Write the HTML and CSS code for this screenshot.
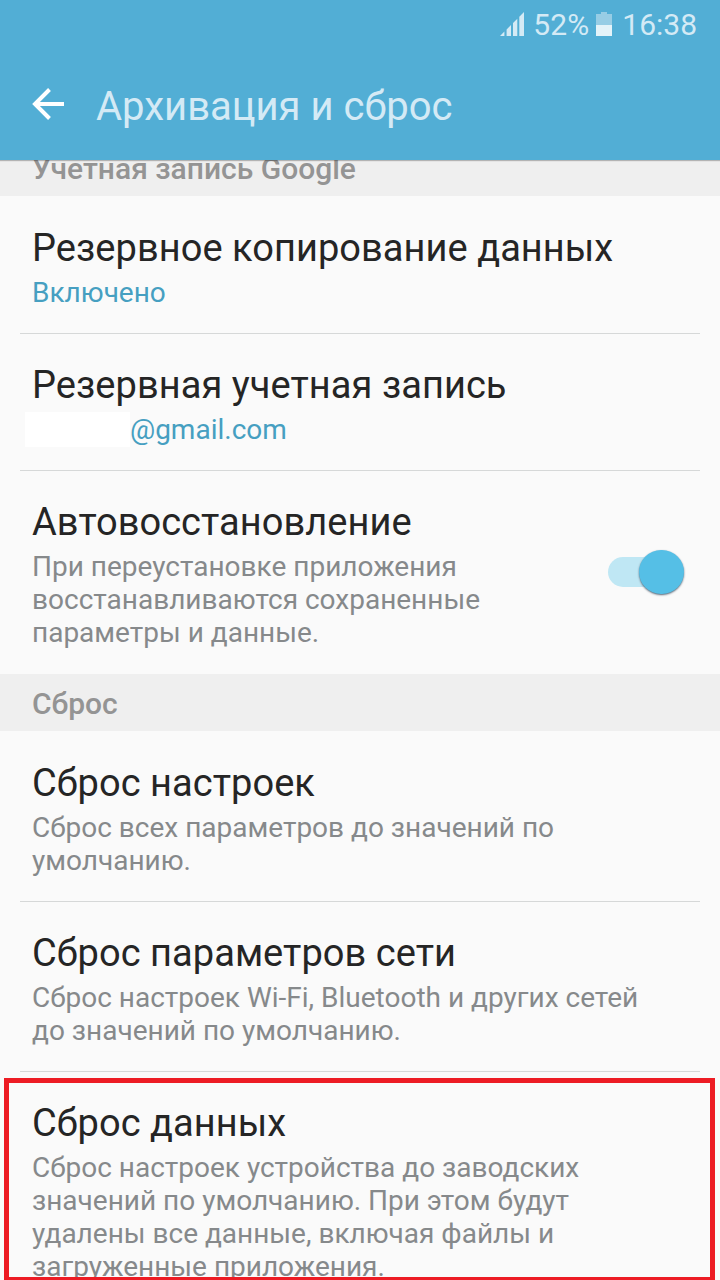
FILE: index.html
```html
<!DOCTYPE html>
<html lang="ru">
<head>
<meta charset="utf-8">
<title>Архивация и сброс</title>
<link rel="stylesheet" href="styles.css">
</head>
<body>
<div class="screen">
  <header class="top">
    <div class="status">
      <svg class="signal" width="24" height="24" viewBox="0 0 24 24"><path d="M0 24L4.400 19.600V24zM6.600 24V17.400L11 13V24zM13 24V11L17.300 6.700V24zM19.300 24V4.700L24 0V24z"/></svg>
      <span class="percent">52%</span>
      <svg class="battery" width="16" height="24" viewBox="0 0 16 24"><path class="dim" d="M5 0h6v2h5v11H0V2h5z"/><path class="charge" d="M0 13h16v11H0z"/></svg>
      <span class="clock">16:38</span>
    </div>
    <div class="bar">
      <svg class="back" width="34" height="34" viewBox="0 0 34 34"><path d="M33 17H4M18.500 2.500L4 17l14.500 14.500"/></svg>
      <h1 class="heading">Архивация и сброс</h1>
    </div>
  </header>
  <main class="list">
    <div class="section section-cut"><span>Учетная запись Google</span></div>
    <div class="item"><div class="title">Резервное копирование данных</div><div class="note blue">Включено</div></div>
    <div class="item"><div class="title">Резервная учетная запись</div><div class="note blue account"><span class="mask"></span>@gmail.com</div></div>
    <div class="item row"><div><div class="title">Автовосстановление</div><div class="note">При переустановке приложения<br>восстанавливаются сохраненные<br>параметры и данные.</div></div><div class="switch"><span class="knob"></span></div></div>
    <div class="section"><span>Сброс</span></div>
    <div class="item"><div class="title">Сброс настроек</div><div class="note">Сброс всех параметров до значений по<br>умолчанию.</div></div>
    <div class="item"><div class="title">Сброс параметров сети</div><div class="note">Сброс настроек Wi-Fi, Bluetooth и других сетей<br>до значений по умолчанию.</div></div>
    <div class="item"><div class="title">Сброс данных</div><div class="note">Сброс настроек устройства до заводских<br>значений по умолчанию. При этом будут<br>удалены все данные, включая файлы и<br>загруженные приложения.</div></div>
  </main>
  <div class="marker"></div>
</div>
</body>
</html>
```
FILE: styles.css
```css
* { box-sizing: border-box; }
body { margin: 0; font-family: Roboto, "Noto Sans", sans-serif; }
.screen { position: relative; width: 720px; height: 1280px; overflow: hidden; background: #fafafa; display: flex; flex-direction: column; }
.top { height: 160px; flex: none; background: #52aed5; color: #d4eaf5; box-shadow: 0 1px 1px rgba(0, 0, 0, .25); z-index: 1; }
.status { height: 48px; padding-right: 24px; display: flex; justify-content: flex-end; align-items: center; font-size: 30px; fill: #d4eaf5; }
.percent { margin-left: 10px; letter-spacing: .1px; }
.battery { margin: 0 10px 0 7px; }
.clock { margin-right: -1px; }
.signal { margin-right: -1px; }
.dim { fill: #97cde5; }
.charge { fill: #e4f3f9; }
.bar { height: 112px; padding: 0 31px; display: flex; align-items: center; }
.back { fill: none; stroke: #fff; stroke-width: 4; }
.heading { margin: 6px 0 0 31px; font-size: 40px; font-weight: 400; line-height: 48px; }
.list { flex: none; height: 1120px; overflow: hidden; }
.section { height: 57px; padding: 2px 32px 0; display: flex; align-items: center; background: #efefef; color: #949494; font-size: 30px; font-weight: 500; line-height: 35px; }
.section-cut { height: 36px; align-items: flex-end; padding-bottom: 10px; overflow: hidden; }
.item { margin: 0 20px; padding: 29px 12px 24px; }
.item + .item { padding-top: 28px; border-top: 1px solid #d6d8d8; }
.row { display: flex; position: relative; padding-bottom: 25px; }
.title { height: 51px; font-size: 38px; line-height: 46px; letter-spacing: .05px; color: #252525; white-space: nowrap; }
.note { font-size: 28px; line-height: 33px; color: #86898b; white-space: nowrap; }
.blue { color: #469fc1; }
.account { display: flex; }
.mask { width: 105px; height: 35px; margin: -1px 0 -1px -7px; background: #fff; }
.switch { position: absolute; left: 588px; top: 86px; width: 70px; height: 30px; border-radius: 15px; background: #bfe7f4; }
.knob { position: absolute; left: 31px; top: -7.5px; width: 44.5px; height: 44.5px; border-radius: 50%; background: #55bfe6; box-shadow: 0 1px 2px #567; }
.marker { position: absolute; left: 4px; top: 1078px; width: 711px; height: 202px; border: 5px solid #ed1c24; border-bottom-width: 3px; }
```
